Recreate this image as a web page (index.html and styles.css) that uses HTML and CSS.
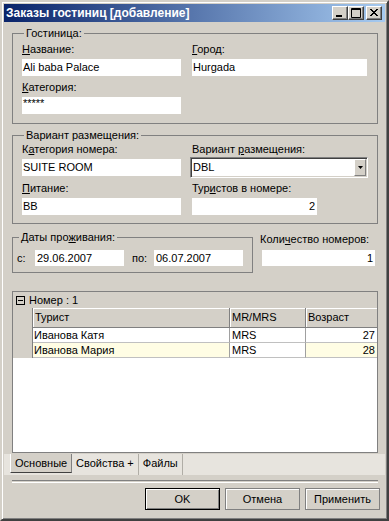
FILE: index.html
```html
<!DOCTYPE html>
<html lang="ru">
<head>
  <meta charset="UTF-8">
  <title>Заказы гостиниц [добавление]</title>
  <link rel="stylesheet" href="styles.css">
</head>
<body>
  <div class="window">
    <div class="titlebar">
      <span class="title">Заказы гостиниц [добавление]</span>
      <div class="caption-btns">
        <div class="cap-btn"><svg width="12" height="10" viewBox="0 0 12 10"><rect x="2" y="7" width="6" height="2" fill="#000"/></svg></div>
        <div class="cap-btn"><svg width="12" height="10" viewBox="0 0 12 10"><path d="M1.5 0.5h9v9h-9z M1 1.5h10" fill="none" stroke="#000"/></svg></div>
        <div class="cap-btn close"><svg width="12" height="10" viewBox="0 0 12 10"><path d="M2 1l7 7M3 1l7 7M9 1l-7 7M10 1l-7 7" stroke="#000" stroke-width="1"/></svg></div>
      </div>
    </div>

    <div class="client">
      <fieldset class="group hotel">
        <legend>Гостиница:</legend>
        <div class="fields">
          <div class="field"><label><u>Н</u>азвание:</label><div class="edit">Ali baba Palace</div></div>
          <div class="field"><label><u>Г</u>ород:</label><div class="edit">Hurgada</div></div>
          <div class="field"><label><u>К</u>атегория:</label><div class="edit stars">*****</div></div>
        </div>
      </fieldset>

      <fieldset class="group room">
        <legend>Вариант размещения:</legend>
        <div class="fields">
          <div class="field"><label>К<u>а</u>тегория номера:</label><div class="edit">SUITE ROOM</div></div>
          <div class="field"><label>Вариант <u>р</u>азмещения:</label>
            <div class="combo">
              <span class="combo-text">DBL</span>
              <span class="combo-btn"><svg width="5" height="3" viewBox="0 0 5 3"><path d="M0 0h5L2.5 3z" fill="#000"/></svg></span>
            </div>
          </div>
          <div class="field"><label><u>П</u>итание:</label><div class="edit">BB</div></div>
          <div class="field"><label>Тур<u>и</u>стов в номере:</label><div class="edit num short">2</div></div>
        </div>
      </fieldset>

      <div class="dates-row">
        <fieldset class="group dates">
          <legend>Даты про<u>ж</u>ивания:</legend>
          <div class="date-fields">
            <span class="date-label">с:</span>
            <div class="edit date">29.06.2007</div>
            <span class="date-label po">по:</span>
            <div class="edit date">06.07.2007</div>
          </div>
        </fieldset>
        <div class="count">
          <label>Коли<u>ч</u>ество номеров:</label>
          <div class="edit num">1</div>
        </div>
      </div>

      <div class="grid">
        <div class="grp-row">
          <span class="toggle"></span>
          <span>Номер : 1</span>
        </div>
        <div class="grid-line hdr">
          <div class="indent"></div>
          <div class="cell c1">Турист</div>
          <div class="cell c2">MR/MRS</div>
          <div class="cell c3">Возраст</div>
        </div>
        <div class="grid-line">
          <div class="indent"></div>
          <div class="cell c1">Иванова Катя</div>
          <div class="cell c2">MRS</div>
          <div class="cell c3 num">27</div>
        </div>
        <div class="grid-line current">
          <div class="indent"></div>
          <div class="cell c1">Иванова Мария</div>
          <div class="cell c2">MRS</div>
          <div class="cell c3 num">28</div>
        </div>
      </div>

      <div class="tabs">
        <div class="tab active">Основные</div>
        <div class="tab">Свойства +</div>
        <div class="tab">Файлы</div>
      </div>

      <div class="separator"></div>

      <div class="buttons">
        <div class="btn default">OK</div>
        <div class="btn">Отмена</div>
        <div class="btn">Применить</div>
      </div>
    </div>
  </div>
</body>
</html>
```

FILE: styles.css
```css
body {
  margin: 0;
  font-family: "Liberation Sans", Arial, sans-serif;
  font-size: 11px;
  color: #000;
  background: #d4d0c8;
}
.window {
  width: 389px;
  height: 521px;
  box-sizing: border-box;
  background: #d4d0c8;
  border: 2px solid;
  border-color: #d4d0c8 #404040 #404040 #d4d0c8;
  box-shadow: inset 1px 1px #fff, inset -1px -1px #808080;
  padding: 2px;
  display: flex;
  flex-direction: column;
}
.titlebar {
  height: 18px;
  display: flex;
  align-items: center;
  justify-content: space-between;
  padding: 0 3px 0 2px;
  background: linear-gradient(to right, #0a246a, #a6caf0);
}
.title {
  color: #fff;
  font-weight: bold;
  font-size: 12px;
  line-height: 14px;
}
.caption-btns {
  display: flex;
}
.cap-btn {
  width: 16px;
  height: 14px;
  box-sizing: border-box;
  background: #d4d0c8;
  border-top: 1px solid #fff;
  border-left: 1px solid #fff;
  border-right: 1px solid #404040;
  border-bottom: 1px solid #404040;
  box-shadow: inset -1px -1px #808080;
  display: flex;
  align-items: center;
  justify-content: center;
}
.cap-btn.close {
  margin-left: 2px;
}
.client {
  display: flex;
  flex-direction: column;
}
label {
  line-height: 13px;
  white-space: nowrap;
}
.group {
  box-sizing: border-box;
  width: 366px;
  margin: 5px 0 0 8px;
  border: 1px solid #808080;
  padding: 3px 9px 9px;
  min-width: 0;
}
.group legend {
  padding: 0 2px;
  margin-left: 2px;
  line-height: 13px;
}
.fields {
  display: grid;
  grid-template-columns: 159px 175px;
  column-gap: 11px;
  row-gap: 5px;
}
.field {
  display: flex;
  flex-direction: column;
  gap: 3px;
}
.edit {
  height: 17px;
  line-height: 17px;
  background: #fff;
  padding: 0 1px;
  white-space: nowrap;
  box-sizing: border-box;
}
.edit.num {
  text-align: right;
  padding-right: 2px;
}
.edit.short {
  width: 125px;
}
.edit.stars {
  line-height: 13px;
}
.room {
  padding: 1px 9px 8px;
}
.room .fields {
  row-gap: 6px;
}
.combo {
  height: 21px;
  box-sizing: border-box;
  margin: -2px -1px -2px -2px;
  border: 1px solid;
  border-color: #808080 #fff #fff #808080;
  box-shadow: inset 1px 1px #404040, inset -1px -1px #d4d0c8;
  background: #fff;
  display: flex;
  align-items: stretch;
  padding: 1px;
}
.combo-text {
  flex: 1;
  line-height: 17px;
  padding-left: 1px;
}
.combo-btn {
  width: 12px;
  box-sizing: border-box;
  background: #d4d0c8;
  border-top: 1px solid #fff;
  border-left: 1px solid #fff;
  border-right: 1px solid #808080;
  border-bottom: 1px solid #808080;
  display: flex;
  align-items: center;
  justify-content: center;
}
.dates-row {
  display: flex;
  margin-top: 2px;
}
.group.dates {
  width: 241px;
  padding: 6px 8px 6px 4px;
}
.date-fields {
  display: flex;
  align-items: center;
}
.date-label {
  width: 18px;
}
.date-label.po {
  width: 22px;
  margin-left: 8px;
}
.edit.date {
  width: 89px;
  height: 16px;
  line-height: 16px;
  padding-left: 2px;
}
.count {
  display: flex;
  flex-direction: column;
  margin: 7px 0 0 7px;
  gap: 4px;
}
.count .edit {
  width: 113px;
  height: 16px;
  line-height: 16px;
  margin-left: 2px;
}
.grid {
  box-sizing: border-box;
  width: 366px;
  height: 162px;
  margin: 18px 0 0 8px;
  border: 1px solid #808080;
  background: #fff;
}
.grp-row {
  height: 16px;
  background: #d4d0c8;
  display: flex;
  align-items: center;
  gap: 4px;
  padding-left: 3px;
}
.toggle {
  width: 9px;
  height: 9px;
  box-sizing: border-box;
  border: 1px solid #000;
  background: #d4d0c8 linear-gradient(#000, #000) center / 5px 1px no-repeat;
}
.grid-line {
  display: flex;
  height: 15px;
  line-height: 14px;
}
.grid-line.hdr {
  height: 20px;
  line-height: 19px;
}
.indent {
  width: 19px;
  background: #d4d0c8;
  border-right: 1px solid #808080;
}
.cell {
  box-sizing: border-box;
  border-right: 1px solid #a0a0a0;
  border-bottom: 1px solid #c0c0c0;
  padding: 0 2px 0 1px;
  white-space: nowrap;
}
.hdr .cell {
  background: #d4d0c8;
  box-shadow: inset 1px 1px #fff;
  border-right-color: #808080;
  border-bottom-color: #808080;
  padding-left: 2px;
}
.cell.c1 {
  width: 197px;
}
.cell.c2 {
  width: 76px;
  padding-left: 2px;
}
.cell.c3 {
  flex: 1;
  border-right: none;
}
.cell.num {
  text-align: right;
}
.current .c1,
.current .c3 {
  background: #fffde4;
}
.tabs {
  display: flex;
  height: 21px;
  margin-top: 1px;
  background: #e7e4de;
  padding-left: 6px;
  line-height: 18px;
}
.tab {
  padding: 0 4px;
  border-right: 1px solid #b0ada6;
}
.tab.active {
  width: 62px;
  box-sizing: border-box;
  height: 19px;
  background: #d4d0c8;
  border-left: 1px solid #fff;
  border-right: 1px solid #808080;
  border-bottom: 1px solid #404040;
}
.separator {
  height: 1px;
  margin: 5px 7px 0 8px;
  border-top: 1px solid #808080;
  border-bottom: 1px solid #fff;
}
.buttons {
  display: flex;
  justify-content: flex-end;
  gap: 5px;
  padding-right: 5px;
  margin-top: 5px;
}
.btn {
  width: 75px;
  height: 22px;
  box-sizing: border-box;
  border: 1px solid #808080;
  box-shadow: inset 1px 1px #fff;
  text-align: center;
  line-height: 20px;
}
.btn.default {
  border-color: #000;
  box-shadow: inset 1px 1px #fff, inset -1px -1px #808080;
}
```
